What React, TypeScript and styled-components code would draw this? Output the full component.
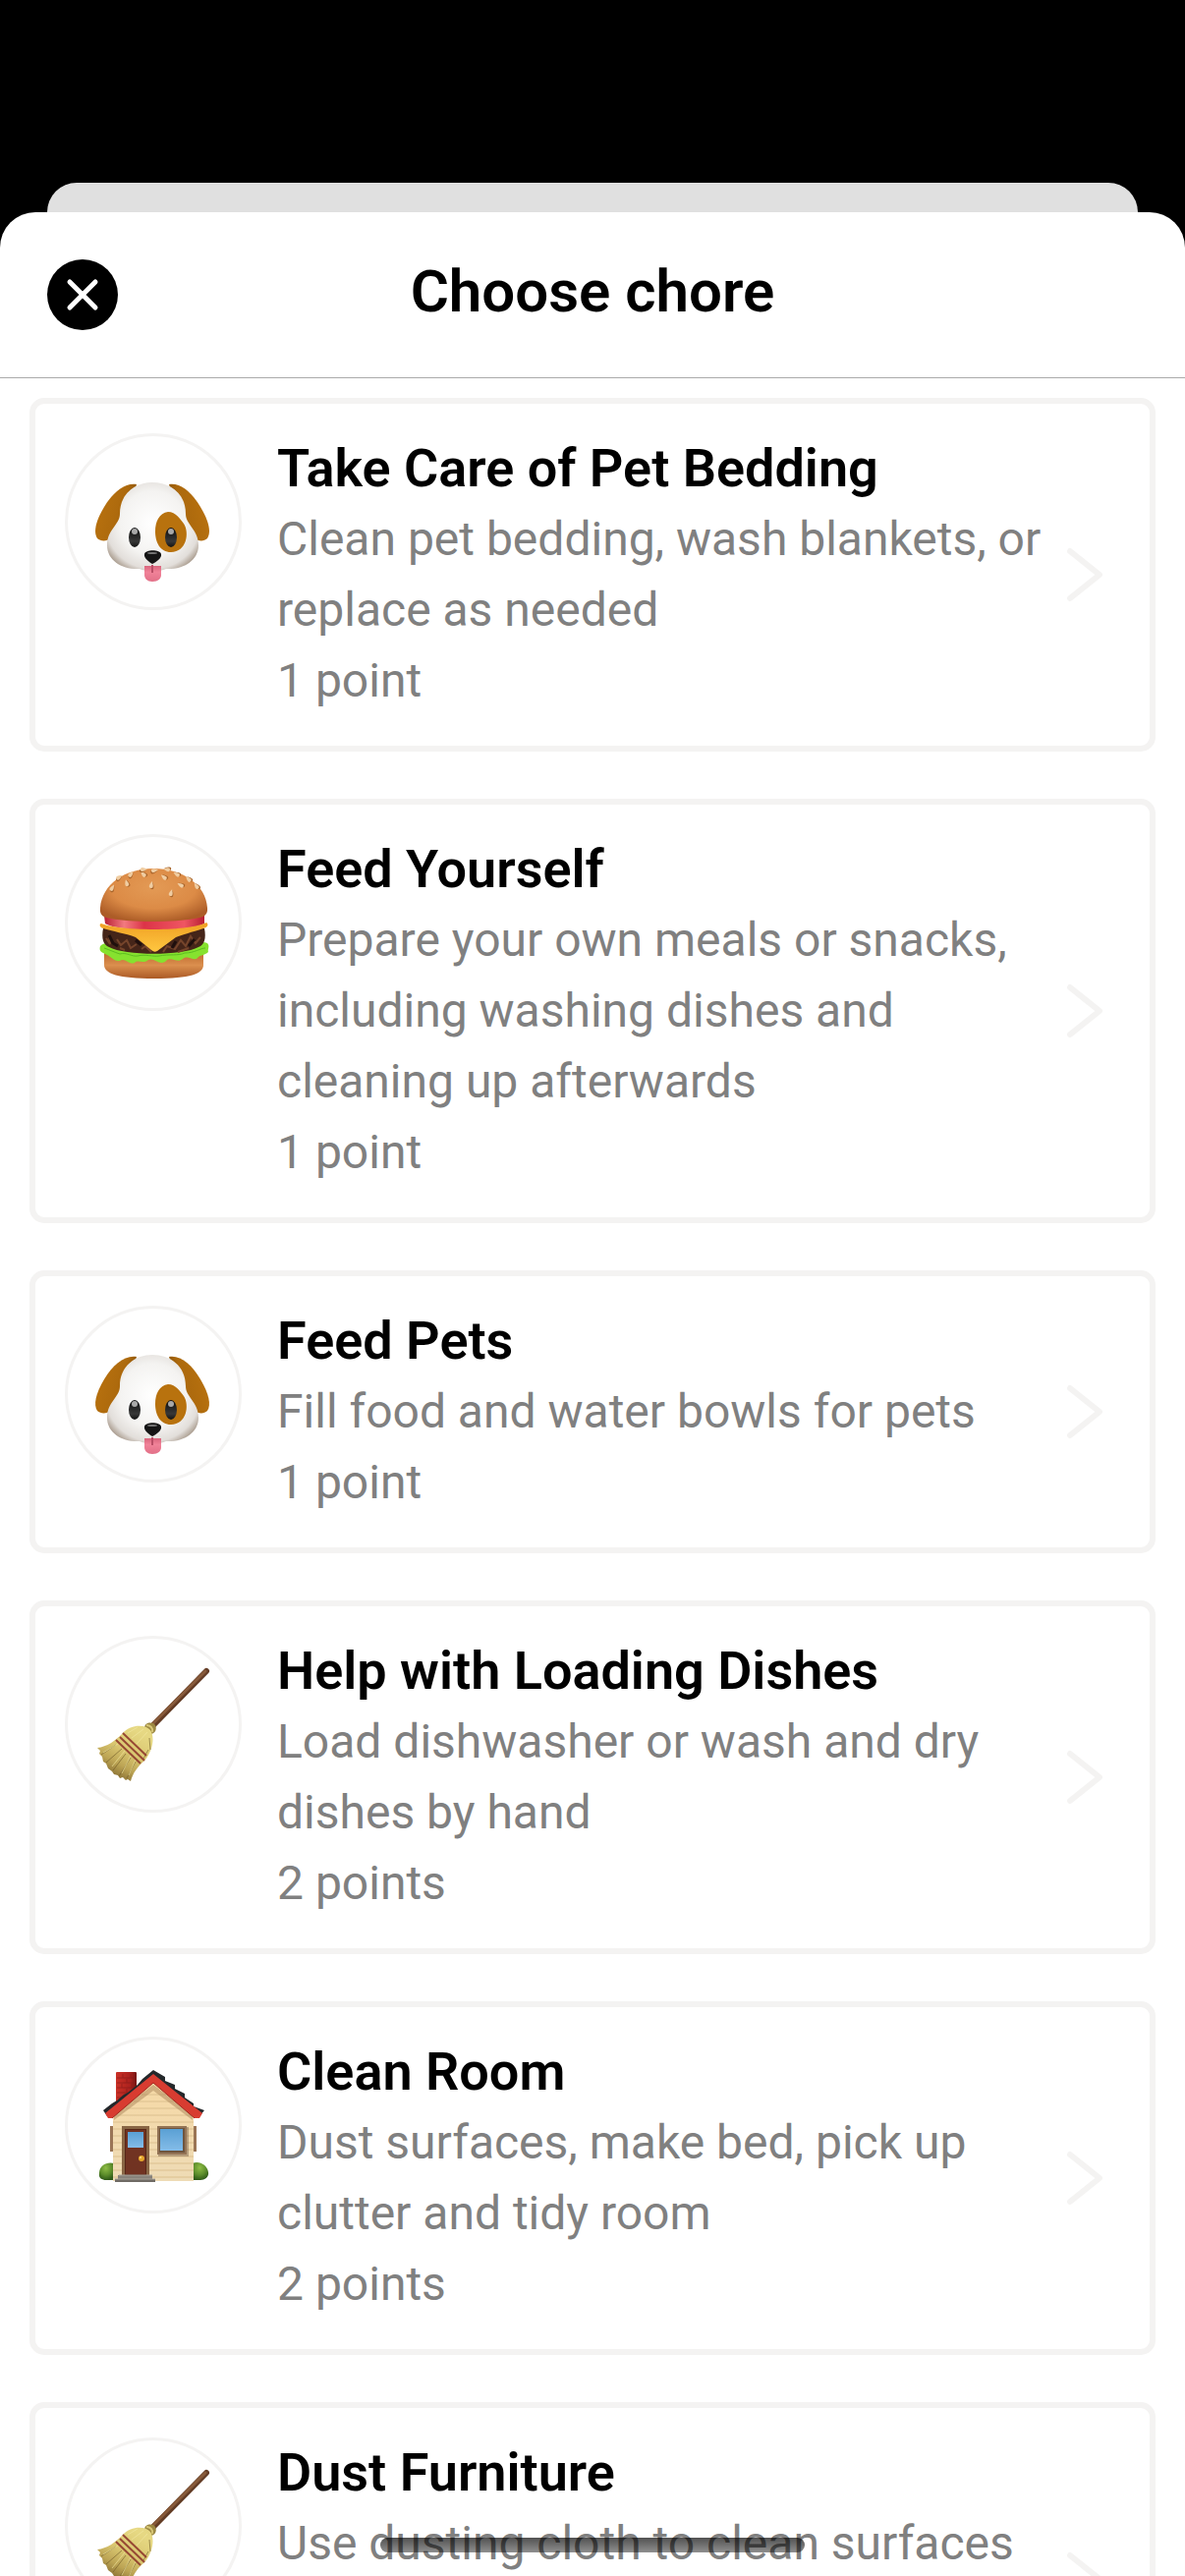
import React, { useId } from "react";
import styled, { createGlobalStyle } from "styled-components";

const GlobalStyle = createGlobalStyle`
  *, *::before, *::after { box-sizing: border-box; }
  body { margin: 0; background: #000; font-family: Roboto, "Noto Sans", sans-serif; }
`;

const Screen = styled.main`
  position: relative;
  display: flex;
  flex-direction: column;
  height: 100vh;
  padding-top: 186px;
  overflow: hidden;
  background: #000;
`;

const BackSheet = styled.div`
  flex: none;
  height: 30px;
  margin: 0 48px;
  border-radius: 30px 30px 0 0;
  background: #e0e0e0;
`;

const Sheet = styled.section`
  display: flex;
  flex-direction: column;
  flex: 1;
  min-height: 0;
  overflow: hidden;
  border-radius: 36px 36px 0 0;
  background: #fff;
`;

const Header = styled.header`
  display: grid;
  flex: none;
  grid-template-columns: 72px 1fr 72px;
  align-items: start;
  padding: 48px;
  border-bottom: 1px solid #aaa;
`;

const CloseButton = styled.button`
  display: grid;
  place-items: center;
  width: 72px;
  height: 72px;
  padding: 0;
  border: 0;
  border-radius: 50%;
  background: #000;
  cursor: pointer;
`;

const Title = styled.h1`
  margin: 0;
  font-size: 60px;
  font-weight: 600;
  line-height: 66px;
  text-align: center;
  color: #000;
`;

const List = styled.ul`
  display: flex;
  flex: 1;
  flex-direction: column;
  gap: 48px;
  min-height: 0;
  margin: 0;
  padding: 20px 30px 48px;
  overflow-y: auto;
  list-style: none;
  scrollbar-width: none;
`;

const Item = styled.li`
  display: flex;
  flex: none;
`;

const Card = styled.button`
  display: flex;
  flex: 1;
  align-items: center;
  padding: 30px;
  border: 6px solid #f4f3f2;
  border-radius: 15px;
  background: #fff;
  font: inherit;
  text-align: left;
  cursor: pointer;
`;

const Avatar = styled.span`
  display: grid;
  flex: none;
  align-self: flex-start;
  place-items: center;
  width: 180px;
  height: 180px;
  margin-right: 36px;
  border: 3px solid #f4f3f2;
  border-radius: 50%;
`;

const Copy = styled.span`
  display: flex;
  flex: 1;
  flex-direction: column;
  min-width: 0;
`;

const Name = styled.span`
  font-size: 54px;
  font-weight: 600;
  line-height: 72px;
  color: #000;
`;

const Detail = styled.span`
  font-size: 48px;
  line-height: 72px;
  color: #808080;
`;

const Chevron = styled.svg`
  flex: none;
  width: 72px;
  height: 72px;
  fill: none;
  stroke: #f4f3f2;
  stroke-width: 2;
  stroke-linecap: round;
  stroke-linejoin: round;
`;

const HomeIndicator = styled.div`
  position: absolute;
  bottom: 24px;
  left: 50%;
  width: 432px;
  height: 15px;
  margin-left: -216px;
  border-radius: 8px;
  background: linear-gradient(rgba(0, 0, 0, 0.68), rgba(0, 0, 0, 0.44));
  pointer-events: none;
`;

const Picture = styled.svg`
  display: block;
  width: 120px;
  height: 120px;
  overflow: visible;
`;

function Dog() {
  const id = useId();
  return (
    <Picture viewBox="0 0 120 120" aria-hidden="true">
      <defs>
        <radialGradient id={id + "f"} cx="50%" cy="46%" r="60%">
          <stop offset="0" stopColor="#ffffff" />
          <stop offset="0.6" stopColor="#f4f3f1" />
          <stop offset="0.86" stopColor="#e2deda" />
          <stop offset="1" stopColor="#ac9f92" />
        </radialGradient>
        <linearGradient id={id + "l"} x1="0" y1="0.3" x2="1" y2="0.7">
          <stop offset="0" stopColor="#b9720f" />
          <stop offset="0.6" stopColor="#ac690d" />
          <stop offset="1" stopColor="#6f4307" />
        </linearGradient>
        <linearGradient id={id + "r"} x1="1" y1="0.3" x2="0" y2="0.7">
          <stop offset="0" stopColor="#b9720f" />
          <stop offset="0.6" stopColor="#ac690d" />
          <stop offset="1" stopColor="#6f4307" />
        </linearGradient>
        <linearGradient id={id + "e"} x1="0" y1="0" x2="0" y2="1">
          <stop offset="0" stopColor="#0c0c0c" />
          <stop offset="0.7" stopColor="#383838" />
          <stop offset="1" stopColor="#111" />
        </linearGradient>
        <linearGradient id={id + "t"} x1="0" y1="0" x2="0" y2="1">
          <stop offset="0" stopColor="#d9647c" />
          <stop offset="0.4" stopColor="#f08298" />
          <stop offset="1" stopColor="#e27088" />
        </linearGradient>
      </defs>
      <path d="M43 22C31 20 19 30 10 45C1 60-1 71 3 77C6 80 12 80 15 78L32 60Z" fill={`url(#${id}l)`} />
      <path d="M76 22C88 20 99 30 108 45C117 60 119 71 115 77C112 80 107 80 103 78L87 60Z" fill={`url(#${id}r)`} />
      <path d="M59 20C77 20 93 31 93 52C93 63 106 68 106 84C106 100 90 109 73 108C67 111 52 111 46 108C29 109 13 100 13 84C13 68 26 63 26 52C26 31 42 20 59 20Z" fill={`url(#${id}f)`} />
      <path d="M75 50C83 50 88 58 91 62C97 71 94 91 78 91C67 91 62 81 62 70C62 60 66 51 75 50Z" fill="#b8720e" />
      <ellipse cx="41" cy="76" rx="6" ry="10" fill={`url(#${id}e)`} />
      <ellipse cx="78" cy="76" rx="6" ry="10" fill={`url(#${id}e)`} />
      <ellipse cx="41" cy="70" rx="3" ry="3" fill="#a8a8a8" />
      <ellipse cx="78" cy="70" rx="3" ry="3" fill="#a8a8a8" />
      <path d="M51 105H68V114C68 118 65 121 59 121C54 121 51 118 51 114Z" fill={`url(#${id}t)`} />
      <path d="M59 104V112" stroke="#b94e66" strokeWidth="2" />
      <path d="M51 93C52 88 67 88 68 93C69 97 63 101 59 103C56 101 50 97 51 93Z" fill="#151515" />
      <ellipse cx="59" cy="92" rx="5" ry="1" fill="#777" />
    </Picture>
  );
}

const sesameSeeds = [
  [18, 25, 30], [33, 20, -15], [25, 14, 55], [37, 11, 40], [50, 11, -45],
  [58, 22, 10], [78, 30, 15], [71, 14, -50], [50, 6, 85], [61, 7, 80],
  [74, 6, -80], [84, 11, -60], [96, 16, -45], [88, 22, -60], [104, 23, -35],
];

function Burger() {
  const id = useId();
  return (
    <Picture viewBox="0 0 120 120" aria-hidden="true">
      <defs>
        <radialGradient id={id + "b"} cx="50%" cy="36%" r="66%">
          <stop offset="0" stopColor="#e39a55" />
          <stop offset="0.6" stopColor="#dc8b46" />
          <stop offset="1" stopColor="#ac5c27" />
        </radialGradient>
        <linearGradient id={id + "u"} x1="0" y1="0" x2="0" y2="1">
          <stop offset="0" stopColor="#bd692f" />
          <stop offset="0.5" stopColor="#db8f4e" />
          <stop offset="1" stopColor="#ab5a26" />
        </linearGradient>
        <linearGradient id={id + "m"} x1="0" y1="0" x2="1" y2="0">
          <stop offset="0" stopColor="#b81f33" />
          <stop offset="0.2" stopColor="#f27a80" />
          <stop offset="0.4" stopColor="#dc3348" />
          <stop offset="0.8" stopColor="#ef5662" />
          <stop offset="1" stopColor="#b81f33" />
        </linearGradient>
        <linearGradient id={id + "c"} x1="0" y1="0" x2="0" y2="1">
          <stop offset="0" stopColor="#f0a024" />
          <stop offset="1" stopColor="#ffc740" />
        </linearGradient>
      </defs>
      <path d="M10 90H111V103C111 112 98 117 61 117C24 117 10 112 10 103Z" fill={`url(#${id}u)`} />
      <path d="M6 84C9 80 15 81 22 81H100C107 81 110 79 115 81C118 84 115 87 116 90C112 94 108 92 104 97C98 98 95 93 90 97C84 102 78 94 73 99C67 105 61 95 55 98C49 103 45 97 41 101C36 104 31 95 26 99C21 100 17 95 13 93C9 91 4 90 6 84Z" fill="#86e22f" />
      <path d="M10 86C16 88 20 90 26 92C33 90 38 95 44 94C52 92 60 95 66 94C76 92 86 94 92 91C102 91 108 86 113 86" stroke="#5bbd20" strokeWidth="1" fill="none" />
      <path d="M9 66H112C114 76 112 83 106 85C90 94 31 94 15 85C9 83 7 76 9 66Z" fill="#452519" />
      <path d="M12 76L16 82L15 74M23 77L27 83L33 78L37 86L43 82M48 87L52 84L58 90M70 90L74 84L82 87L88 78L93 84L98 74L103 81L108 75M26 86L31 88M85 90L96 86" stroke="#75442b" strokeWidth="2" fill="none" />
      <path d="M15 73L19 81L24 84M42 78L48 83M102 77L96 84M83 79L79 86" stroke="#1f0f0d" strokeWidth="3" fill="none" />
      <path d="M10 53H112V61C98 70 24 70 11 61Z" fill={`url(#${id}m)`} />
      <path d="M7 61C14 64 35 67 61 67C87 67 106 64 114 60C117 62 115 65 111 66C99 70 90 72 83 75L64 89Q61 91 58 88L42 75C32 71 18 69 9 66C5 65 5 61 7 61Z" fill={`url(#${id}c)`} />
      <path d="M60 5C90 5 114 22 115 45C116 53 110 55 102 56C82 60 36 60 17 56C10 55 5 53 6 45C8 21 31 5 60 5Z" fill={`url(#${id}b)`} />
      {sesameSeeds.map(([x, y, angle]) => (
        <g key={`${x}-${y}`} transform={`translate(${x} ${y}) rotate(${angle})`}>
          <path d="M1 -3Q5 4 1 4Q-2 4 1 -3Z" fill="#a9652b" />
          <path d="M0 -4Q4 3 0 3Q-4 3 0 -4Z" fill="#f0cda2" />
        </g>
      ))}
    </Picture>
  );
}

function Broom() {
  const id = useId();
  return (
    <Picture viewBox="0 0 120 120" aria-hidden="true">
      <defs>
        <linearGradient id={id + "s"} x1="0.75" y1="0.1" x2="0.3" y2="0.9">
          <stop offset="0" stopColor="#e6d883" />
          <stop offset="0.45" stopColor="#d9c670" />
          <stop offset="0.75" stopColor="#bda555" />
          <stop offset="1" stopColor="#8d7435" />
        </linearGradient>
      </defs>
      <path d="M60 61L114 6" stroke="#633c25" strokeWidth="6" strokeLinecap="round" />
      <path d="M59 60L113 6" stroke="#875a3a" strokeWidth="3" strokeLinecap="round" />
      <path d="M51 64C51 58 59 57 62 61C64 65 62 69 58 70Z" fill="#9c8842" />
      <path d="M53 61C57 61 60 64 59 68" stroke="#d6c676" strokeWidth="2" fill="none" />
      <path d="M29 69C37 60 52 60 57 66C62 73 59 87 52 96C44 103 39 110 37 118L34 116L32 117L29 114L26 115L24 112L20 111L18 108L14 105L12 100L9 98L8 93L5 90L6 87L3 84C13 83 21 77 29 69Z" fill={`url(#${id}s)`} />
      <g fill="none" stroke="#6d5724" strokeWidth="1" opacity="0.6">
        <path d="M22 81L7 91M28 85L12 99M32 90L19 107M37 94L25 113M42 98L33 115M56 74L57 86M55 86L50 95" />
      </g>
      <g fill="none" stroke="#f4e9a4" strokeWidth="1" opacity="0.6">
        <path d="M34 69L44 63M38 74L50 65M43 80L54 68M24 80L9 89M31 87L18 103M37 92L28 110M42 96L35 112" />
      </g>
      <g fill="none" stroke="#8f3a2c" strokeWidth="2" opacity="0.9">
        <path d="M29 69L53 92M26 73L51 97M22 76L47 100" />
      </g>
    </Picture>
  );
}

function House() {
  const id = useId();
  return (
    <Picture viewBox="0 -4 120 120" aria-hidden="true">
      <defs>
        <linearGradient id={id + "w"} x1="0" y1="0" x2="0" y2="1">
          <stop offset="0" stopColor="#f6d9a6" />
          <stop offset="1" stopColor="#eedbb5" />
        </linearGradient>
        <linearGradient id={id + "g"} x1="0" y1="0" x2="0" y2="1">
          <stop offset="0" stopColor="#5aa0d4" />
          <stop offset="1" stopColor="#84bce8" />
        </linearGradient>
        <linearGradient id={id + "c"} x1="0" y1="0" x2="1" y2="0">
          <stop offset="0" stopColor="#cb3127" />
          <stop offset="0.7" stopColor="#aa211d" />
          <stop offset="1" stopColor="#721513" />
        </linearGradient>
        <radialGradient id={id + "p"} cx="45%" cy="30%" r="70%">
          <stop offset="0" stopColor="#8fbd46" />
          <stop offset="0.6" stopColor="#5b8c2a" />
          <stop offset="1" stopColor="#2f5a18" />
        </radialGradient>
      </defs>
      <path d="M20 95C13 93 5 97 5 105C4 110 8 112 12 112H20Z" fill={`url(#${id}p)`} />
      <path d="M100 95C107 92 115 97 116 104C117 109 112 112 108 112H100Z" fill={`url(#${id}p)`} />
      <path d="M16 57H19V83H16ZM101 57H104V83H101Z" fill="#9a7556" />
      <rect x="22" y="2" width="21" height="33" rx="1" fill={`url(#${id}c)`} />
      <path d="M23 8H43M23 13H43M23 18H43M23 23H39M23 28H34M29 4V8M37 4V8M33 9V13M28 14V18M38 14V18M33 19V23" stroke="#821a18" strokeWidth="1" opacity="0.6" />
      <path d="M19 45L60 13L101 45V113H19Z" fill={`url(#${id}w)`} />
      <path d="M48 25H73M40 32H81M32 39H89M22 46H100M19 53H101M19 60H101M19 67H101M19 74H101M19 81H101M19 88H101M19 95H101M19 102H101M19 109H101" stroke="#dcc08f" strokeWidth="1" />
      <path d="M20 45L60 15L100 45V51L60 21L20 51Z" fill="#a9855a" opacity="0.5" />
      <path d="M9 41L18 34L23 31L30 25L34 23L44 15L49 9L60 0L72 7V11L82 15V19L92 24V28L101 34V37L112 41L107 47L60 10L13 47Z" fill="#24282b" />
      <path d="M11 44L60 4L110 44L107 49L102 49L60 13L18 49H14Z" fill="#d83c31" />
      <path d="M18 49L60 13L102 49" stroke="#a3281f" strokeWidth="1" fill="none" />
      <rect x="28" y="57" width="28" height="50" fill="#886544" />
      <rect x="31" y="60" width="22" height="47" fill="#572718" />
      <rect x="32" y="61" width="20" height="45" fill="#713322" />
      <rect x="34" y="63" width="16" height="16" fill={`url(#${id}g)`} />
      <circle cx="48" cy="90" r="3" fill="#e5a62c" />
      <circle cx="47" cy="89" r="1" fill="#ffe28a" />
      <rect x="65" y="58" width="31" height="30" fill="#664b37" opacity="0.4" />
      <rect x="64" y="57" width="30" height="29" fill="#937355" />
      <rect x="66" y="59" width="26" height="25" fill="#6f553e" />
      <rect x="67" y="60" width="23" height="22" fill={`url(#${id}g)`} />
      <path d="M24 107H59V111H24Z" fill="#88827a" />
      <path d="M21 111H62V114H21Z" fill="#6f6a64" />
      <path d="M25 107H59M21 111H62" stroke="#aaa49a" strokeWidth="1" />
    </Picture>
  );
}

const pictures = { dog: Dog, burger: Burger, broom: Broom, house: House };

type Chore = {
  name: string;
  detail: string;
  points: number;
  picture: keyof typeof pictures;
};

const chores: Chore[] = [
  { name: "Take Care of Pet Bedding", detail: "Clean pet bedding, wash blankets, or replace as needed", points: 1, picture: "dog" },
  { name: "Feed Yourself", detail: "Prepare your own meals or snacks, including washing dishes and cleaning up afterwards", points: 1, picture: "burger" },
  { name: "Feed Pets", detail: "Fill food and water bowls for pets", points: 1, picture: "dog" },
  { name: "Help with Loading Dishes", detail: "Load dishwasher or wash and dry dishes by hand", points: 2, picture: "broom" },
  { name: "Clean Room", detail: "Dust surfaces, make bed, pick up clutter and tidy room", points: 2, picture: "house" },
  { name: "Dust Furniture", detail: "Use dusting cloth to clean surfaces and furniture", points: 2, picture: "broom" },
];

function ChoreCard({ chore }: { chore: Chore }) {
  const Drawing = pictures[chore.picture];
  return (
    <Item>
      <Card type="button">
        <Avatar><Drawing /></Avatar>
        <Copy>
          <Name>{chore.name}</Name>
          <Detail>{chore.detail}</Detail>
          <Detail>{`${chore.points} ${chore.points === 1 ? "point" : "points"}`}</Detail>
        </Copy>
        <Chevron viewBox="0 0 24 24" aria-hidden="true">
          <path d="M7 4L17 12L7 20" />
        </Chevron>
      </Card>
    </Item>
  );
}

export default function App() {
  return (
    <>
      <GlobalStyle />
      <Screen>
        <BackSheet />
        <Sheet>
          <Header>
            <CloseButton type="button" aria-label="Close">
              <svg width="36" height="36" viewBox="0 0 36 36" fill="none" stroke="#fff" strokeWidth="5" strokeLinecap="round" aria-hidden="true">
                <path d="M5 5L31 31M31 5L5 31" />
              </svg>
            </CloseButton>
            <Title>Choose chore</Title>
          </Header>
          <List>
            {chores.map((chore) => (
              <ChoreCard key={chore.name} chore={chore} />
            ))}
          </List>
        </Sheet>
        <HomeIndicator />
      </Screen>
    </>
  );
}
